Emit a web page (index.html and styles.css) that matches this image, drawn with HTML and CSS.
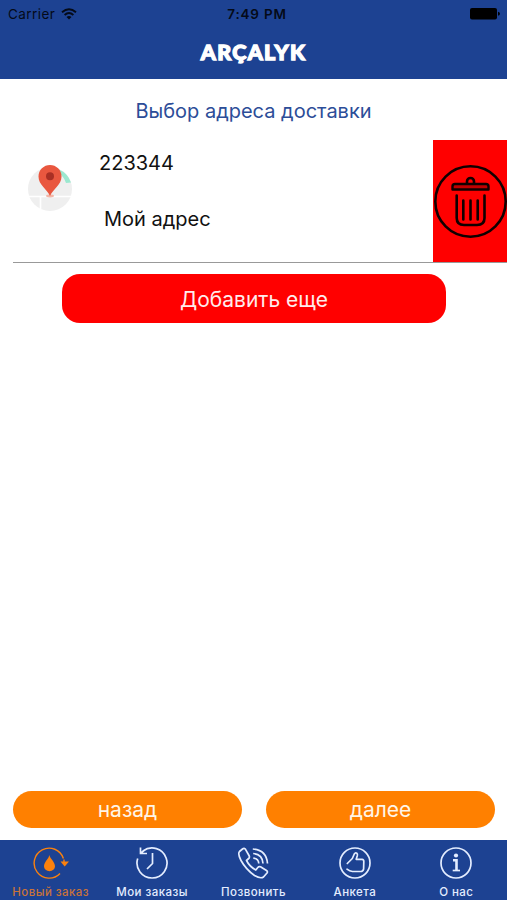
FILE: index.html
```html
<!DOCTYPE html>
<html lang="ru">
<head>
<meta charset="utf-8">
<title>Arçalyk</title>
<link rel="stylesheet" href="styles.css">
</head>
<body>
<header class="header">
  <div class="status">
    <div class="carrier"><span class="carrier-name">Carrier</span>
      <svg class="wifi" width="16" height="12" viewBox="0 0 16 12" fill="none" stroke="#040a18" stroke-width="1.9"><path d="M1 4.3Q8-1.6 15 4.3M3.6 7Q8 3.2 12.4 7"/><path d="M5.5 8.9Q8 6.9 10.500 8.900L8 11.500Z" fill="#040a18" stroke="none"/></svg>
    </div>
    <span class="time">7:49 PM</span>
    <svg class="battery" width="30" height="12" viewBox="0 0 30 12"><rect width="27" height="11.500" rx="2"/><path d="M28 3.800q2 .4 2 2t-2 2z"/></svg>
  </div>
  <div class="logo">ARÇALYK</div>
</header>
<main class="content">
  <h1 class="title">Выбор адреса доставки</h1>
  <section class="address">
    <svg class="pin" width="46" height="50" viewBox="0 0 46 50">
      <circle cx="22" cy="25" r="22" fill="#efefef"/>
      <path d="M0 32.500H44M12.500 32V45" stroke="#fff" stroke-width="1.600"/>
      <path d="M31 5.500Q39.500 9 43 18.500L38 19Q36 13 31 9Z" fill="#9be8cf"/>
      <ellipse cx="22" cy="32" rx="4" ry="1.400" fill="#f3b6a7"/>
      <path d="M22 32C19 25 10.500 21 10.500 12.500A11.500 11.500 0 0 1 33.500 12.500C33.500 21 25 25 22 32Z" fill="#e9573f"/>
      <circle cx="22" cy="12.300" r="4" fill="#a92f24"/>
    </svg>
    <div class="details"><div class="code">223344</div><div class="name">Мой адрес</div></div>
    <div class="delete">
      <svg width="73" height="74" viewBox="0 0 73 74" fill="none" stroke="#100000" stroke-width="2.600" stroke-linecap="round" stroke-linejoin="round">
        <circle cx="36.500" cy="37.500" r="35.200"/>
        <path d="M18.500 25.500V22.500Q18.500 20 21 20H52Q54.500 20 54.500 22.500V25.500Z" fill="#c00000" stroke-width="2.400"/>
        <path d="M33 19V17.500a3.500 3.500 0 0 1 7 0v1.500M22.700 31.500V54Q22.700 61 30 61H43Q50.500 61 50.500 54V31.500M29.300 36.500V55.500M36.500 36.500V55.500M43.700 36.500V55.500"/>
      </svg>
    </div>
  </section>
  <div class="add"><span>Добавить еще</span></div>
  <div class="actions"><div class="action back">назад</div><div class="action next">далее</div></div>
</main>
<nav class="tabs">
  <div class="tab active">
    <svg width="38" height="34" viewBox="0 0 38 34" fill="none" stroke="currentColor" stroke-width="1.400"><path d="M31.400 12.500A15 15 0 1 0 28 27.500M32 13.500V18"/><path d="M28.500 15.500H37L32.700 20.500Z" fill="currentColor" stroke="none"/><path d="M17.300 9C17 12.500 12 16 12 20.200a5.500 5 0 0 0 11 0C23 16 18 12.500 17.300 9Z" fill="currentColor" stroke="none"/></svg>
    <span class="label">Новый заказ</span>
  </div>
  <div class="tab">
    <svg width="38" height="34" viewBox="0 0 38 34" fill="none" stroke="currentColor" stroke-width="1.700"><path d="M10 5A15 15 0 1 1 4.700 12.500M7.500 1.500V7.500H14M19.500 7V17.500L14 23M7.500 7.500L11 4.500"/></svg>
    <span class="label">Мои заказы</span>
  </div>
  <div class="tab">
    <svg width="38" height="34" viewBox="0 0 38 34" fill="none" stroke="currentColor" stroke-width="1.700" stroke-linejoin="round"><path d="M8.500 3L5.500 5.500Q3.500 8 7 14.500Q12 23.500 20.500 29.500Q26.500 33 29.500 31L33 27Q34 25.500 32.500 24.500L26.500 20.800Q25 20 23.800 21.500L21.800 24Q15.500 20.500 12.500 14.500L14.700 12.500Q16 11.300 15 9.500L11.500 3.300Q10.300 1.500 8.500 3ZM19.300 12.200Q24.500 12.500 24.800 17.500M19.200 7.500Q28.500 8.200 29 17.500M18.800 3Q32.500 4 33.500 17.500"/></svg>
    <span class="label">Позвонить</span>
  </div>
  <div class="tab">
    <svg width="38" height="34" viewBox="0 0 38 34" fill="none" stroke="currentColor" stroke-width="1.700" stroke-linecap="round" stroke-linejoin="round"><circle cx="19" cy="17" r="15"/><path d="M11.300 17.500L16.300 12.500L18.300 8Q19.300 6.300 20.800 7.200Q21.800 8 21.300 9.800L20.200 13.300H26Q28 13.500 27.800 15.500L27.600 23Q27 25.500 24.700 25.500H16.500Q13.500 25.200 11 23.200"/></svg>
    <span class="label">Анкета</span>
  </div>
  <div class="tab">
    <svg width="38" height="34" viewBox="0 0 38 34" fill="none" stroke="currentColor" stroke-width="1.700"><circle cx="19" cy="17" r="15"/><circle cx="19" cy="9.500" r="2.100" fill="currentColor" stroke="none"/><path d="M16 14.200H19.500V24" stroke-width="2.600"/><path d="M15.700 24.500H23"/></svg>
    <span class="label">О нас</span>
  </div>
</nav>
</body>
</html>
```

FILE: styles.css
```css
* { box-sizing: border-box; }
body {
  margin: 0;
  height: 900px;
  display: flex;
  flex-direction: column;
  background: #fff;
  color: #111;
  font-family: Inter, "Liberation Sans", sans-serif;
}
svg { display: block; flex: none; }
.header { height: 79px; background: #1d4292; }
.status {
  height: 28px;
  padding: 0 7px 0 8px;
  display: grid;
  grid-template-columns: 1fr auto 1fr;
  align-items: center;
  color: #040a18;
  font-size: 13.500px;
}
.carrier { display: flex; align-items: center; gap: 6px; }
.carrier-name { letter-spacing: 0.450px; }
.time { font-weight: 600; letter-spacing: 0.800px; padding-left: 6px; }
.battery { justify-self: end; fill: #000; }
.logo {
  height: 48px;
  display: flex;
  align-items: center;
  justify-content: center;
  color: #fff;
  font-family: Lato, sans-serif;
  font-size: 21.500px;
  font-weight: 900;
  letter-spacing: 1.300px;
  -webkit-text-stroke: 1.300px #fff;
}
.content { flex: 1; display: flex; flex-direction: column; }
.title {
  margin: 0;
  height: 61px;
  line-height: 64px;
  text-align: center;
  color: #2c4d98;
  font-size: 20px;
  font-weight: 400;
}
.address {
  height: 123px;
  margin-left: 13px;
  padding-left: 15px;
  border-bottom: 1px solid #999;
  display: flex;
}
.pin { margin-top: 24px; }
.details { flex: 1; padding: 10px 0 0 25px; font-size: 20px; line-height: 26px; }
.name { margin: 30px 0 0 5px; }
.delete {
  width: 74px;
  height: 122px;
  background: #f00;
  display: flex;
  align-items: center;
  justify-content: flex-end;
}
.add {
  width: 384px;
  height: 49px;
  margin: 11px 0 0 62px;
  border-radius: 18px;
  background: #f00;
  color: #ffecec;
  font-size: 21px;
  line-height: 51px;
  text-align: center;
}
.actions { display: flex; gap: 24px; margin: auto 12px 12px 13px; }
.action {
  flex: 1;
  height: 37px;
  border-radius: 18.500px;
  background: #ff8000;
  color: #fff5e8;
  font-size: 21px;
  line-height: 38px;
  text-align: center;
}
.tabs {
  height: 60px;
  padding-top: 6px;
  background: #1d4292;
  display: grid;
  grid-template-columns: repeat(5, 1fr);
}
.tab { display: flex; flex-direction: column; align-items: center; color: #e4edff; }
.active { color: #fa810e; }
.label { margin-top: 5px; font-size: 11.500px; font-weight: 500; line-height: 14px; letter-spacing: 0.450px; white-space: nowrap; }
.active .label { color: #ca7338; }
```
